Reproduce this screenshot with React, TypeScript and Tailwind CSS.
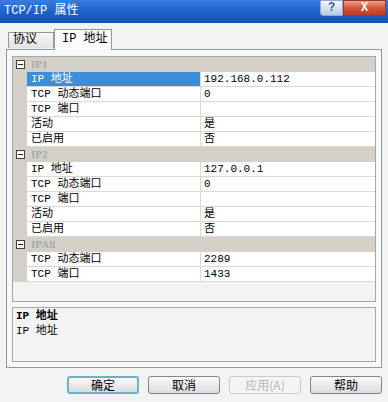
import React from "react";

const F = { fontFamily: '"Liberation Mono", "Noto Sans CJK SC", monospace' };

type Row = { name: string; value: string; sel?: boolean };
type Cat = { title: string; rows: Row[] };

const cats: Cat[] = [
  {
    title: "IP1",
    rows: [
      { name: "IP 地址", value: "192.168.0.112", sel: true },
      { name: "TCP 动态端口", value: "0" },
      { name: "TCP 端口", value: "" },
      { name: "活动", value: "是" },
      { name: "已启用", value: "否" },
    ],
  },
  {
    title: "IP2",
    rows: [
      { name: "IP 地址", value: "127.0.0.1" },
      { name: "TCP 动态端口", value: "0" },
      { name: "TCP 端口", value: "" },
      { name: "活动", value: "是" },
      { name: "已启用", value: "否" },
    ],
  },
  {
    title: "IPAll",
    rows: [
      { name: "TCP 动态端口", value: "2289" },
      { name: "TCP 端口", value: "1433" },
    ],
  },
];

function Minus() {
  return (
    <div className="w-[9px] h-[9px] border border-[#404040] bg-white flex items-center justify-center">
      <div className="w-[5px] h-px bg-[#202020]" />
    </div>
  );
}

function Btn({ label, focus, disabled }: { label: string; focus?: boolean; disabled?: boolean }) {
  return (
    <div
      className={
        "w-[72px] h-[18px] rounded-[3px] flex items-center justify-center text-[12px] leading-none " +
        (disabled
          ? "border border-[#c8cbce] bg-[#f4f4f4] text-[#b4b4b4]"
          : focus
          ? "border-2 border-[#67b3c8] bg-gradient-to-b from-[#fbfbfb] to-[#dcdcdc] text-black"
          : "border border-[#7d8791] bg-gradient-to-b from-[#fbfbfb] to-[#dcdcdc] text-black")
      }
      style={{ fontFamily: '"Noto Sans CJK SC", sans-serif' }}
    >
      {label}
    </div>
  );
}

export default function App() {
  return (
    <div className="w-[388px] h-[402px] bg-[#f3f3f3] flex flex-col overflow-hidden" style={F}>
      {/* title bar */}
      <div className="h-[23px] bg-gradient-to-b from-[#3a7ddc] via-[#1f62cb] to-[#1452b8] flex items-start justify-between">
        <div className="text-white text-[12px] pl-[4px] pt-[4px] leading-[14px]">TCP/IP 属性</div>
        <div className="flex mr-[2px]">
          <div className="w-[23px] h-[16px] rounded-bl-[3px] border border-[#8fa9d4] bg-gradient-to-b from-[#f4f8ff] to-[#b7cbe8] flex items-center justify-center text-[#3a5f9f] text-[12px] font-bold leading-none">
            ?
          </div>
          <div className="w-[43px] h-[16px] rounded-br-[3px] border border-[#9c3b2a] bg-gradient-to-b from-[#e9a08a] via-[#d2553a] to-[#c13a22] flex items-center justify-center text-white text-[12px] font-bold leading-none">
            X
          </div>
        </div>
      </div>

      {/* tabs */}
      <div className="h-[26px] flex items-end pl-[8px]">
        <div className="w-[46px] h-[16px] border border-b-0 border-[#919b9c] bg-gradient-to-b from-[#f6f6f6] to-[#e2e2e2] text-[12px] leading-[15px] pl-[4px] mb-[1px]">
          协议
        </div>
        <div className="w-[58px] h-[21px] border border-b-0 border-[#919b9c] bg-[#fbfbfb] text-[12px] leading-[18px] pl-[7px] -mb-px relative z-10">
          IP 地址
        </div>
      </div>

      {/* panel */}
      <div className="mx-[6px] h-[319px] border border-[#919b9c] bg-[#f8f8f8] px-[5px] pt-[6px] flex flex-col">
        {/* property grid */}
        <div className="h-[246px] border border-[#a6a6a6] bg-[#f3f3f3] flex flex-col text-[11px]">
          {cats.map((c) => (
            <React.Fragment key={c.title}>
              <div className="h-[15px] bg-[#d4d0c8] flex items-center">
                <div className="w-[14px] flex justify-center">
                  <Minus />
                </div>
                <div
                  className="pl-[4px] text-[#a8a8a8] font-bold text-[11px] leading-none"
                  style={{ fontFamily: '"Liberation Serif", serif' }}
                >
                  {c.title}
                </div>
              </div>
              {c.rows.map((r, i) => (
                <div key={i} className="h-[15px] flex">
                  <div className="w-[14px] bg-[#d4d0c8]" />
                  <div
                    className={
                      "w-[173px] border-b border-[#d8d8d8] pl-[4px] leading-[14px] " +
                      (r.sel ? "bg-[#3a8fd8] text-white" : "bg-white text-black")
                    }
                  >
                    {r.name}
                  </div>
                  <div className="flex-1 border-b border-l border-[#d8d8d8] bg-white pl-[3px] leading-[14px]">
                    {r.value}
                  </div>
                </div>
              ))}
            </React.Fragment>
          ))}
        </div>

        {/* description */}
        <div className="mt-[5px] h-[55px] border border-[#a6a6a6] bg-[#f3f3f3] pl-[3px] pt-[1px] text-[11px]">
          <div className="font-bold leading-[15px]">IP 地址</div>
          <div className="leading-[15px]">IP 地址</div>
        </div>
      </div>

      {/* buttons */}
      <div className="flex justify-end gap-[9px] pr-[6px] mt-[8px]">
        <Btn label="确定" focus />
        <Btn label="取消" />
        <Btn label="应用(A)" disabled />
        <Btn label="帮助" />
      </div>
    </div>
  );
}
